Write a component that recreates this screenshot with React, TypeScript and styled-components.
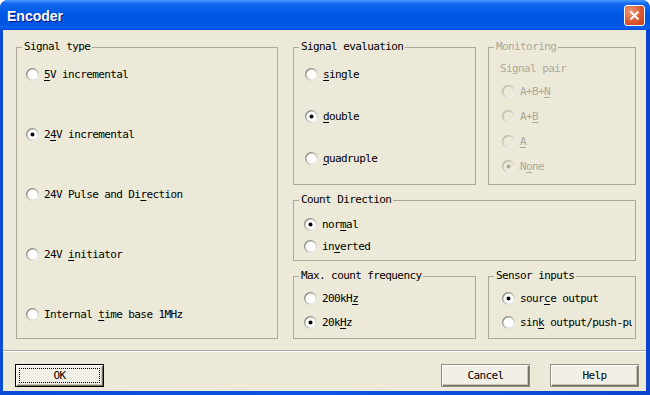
import React from "react";
import styled, { createGlobalStyle } from "styled-components";

const FACE = `"DejaVu Sans Mono", "Liberation Mono", monospace`;

const GlobalStyle = createGlobalStyle`
  html, body {
    margin: 0;
    padding: 0;
    background: #ffffff;
  }
  body {
    font-family: ${FACE};
  }
`;

const Window = styled.div`
  width: 650px;
  height: 395px;
  display: flex;
  flex-direction: column;
  border-radius: 8px 8px 0 0;
  overflow: hidden;
  background: #0b50df;
`;

const TitleBar = styled.div`
  height: 30px;
  flex: none;
  display: flex;
  align-items: center;
  justify-content: space-between;
  padding: 0 5px 0 7px;
  box-sizing: border-box;
  background: linear-gradient(
    to bottom,
    #4a9bff 0%,
    #1268f0 12%,
    #0058e6 45%,
    #0055e3 80%,
    #0a5ff0 92%,
    #0047d4 100%
  );
`;

const Title = styled.div`
  font-family: "Liberation Sans", Arial, sans-serif;
  font-weight: 700;
  font-size: 14px;
  color: #ffffff;
  text-shadow: 1px 1px 0 #0a1883;
  margin-top: 1px;
`;

const CloseButton = styled.div`
  width: 21px;
  height: 21px;
  box-sizing: border-box;
  border: 1px solid #ffffff;
  border-radius: 3px;
  display: flex;
  align-items: center;
  justify-content: center;
  background: radial-gradient(circle at 30% 30%, #ef9c7c 0%, #d9582f 55%, #c2401a 100%);
`;

const Frame = styled.div`
  flex: 1;
  display: flex;
  padding: 0 4px 4px 3px;
  background: linear-gradient(to right, #0a4bd8, #0c55e6 50%, #0a44cf);
`;

const Client = styled.div`
  flex: 1;
  display: flex;
  flex-direction: column;
  background: #ece9d8;
`;

const Main = styled.div`
  display: flex;
  gap: 15px;
  padding: 11px 10px 0 13px;
`;

const Column = styled.div`
  display: flex;
  flex-direction: column;
  gap: 9px;
  width: 343px;
`;

const Row = styled.div`
  display: flex;
  gap: 12px;
`;

const Group = styled.fieldset<{ $w?: number; $h: number }>`
  margin: 0;
  padding: 0;
  min-width: 0;
  box-sizing: border-box;
  border: 1px solid #aca899;
  width: ${(p) => (p.$w ? `${p.$w}px` : "auto")};
  height: ${(p) => p.$h}px;
  flex: ${(p) => (p.$w ? "none" : "1")};
`;

const Legend = styled.legend<{ $disabled?: boolean }>`
  margin-left: 5px;
  padding: 0 2px;
  font-size: 11px;
  line-height: 12px;
  letter-spacing: -0.6px;
  color: ${(p) => (p.$disabled ? "#aca899" : "#000000")};
`;

const Body = styled.div<{ $pt: number; $pl: number; $gap: number }>`
  display: flex;
  flex-direction: column;
  padding: ${(p) => p.$pt}px 3px 0 ${(p) => p.$pl}px;
  gap: ${(p) => p.$gap}px;
  overflow: hidden;
`;

const Caption = styled.div`
  height: 12px;
  line-height: 12px;
  font-size: 11px;
  letter-spacing: -0.6px;
  color: #aca899;
  margin-left: -2px;
  margin-bottom: 1px;
`;

const Option = styled.label<{ $disabled?: boolean }>`
  display: flex;
  align-items: center;
  gap: 5px;
  height: 20px;
  white-space: nowrap;
  overflow: hidden;
  font-size: 11px;
  letter-spacing: -0.6px;
  color: ${(p) => (p.$disabled ? "#aca899" : "#000000")};
`;

const U = styled.span`
  text-decoration: underline;
  text-underline-offset: 2px;
`;

const Separator = styled.div`
  margin-top: 11px;
  height: 1px;
  background: #aca899;
  border-bottom: 1px solid #ffffff;
`;

const Footer = styled.div`
  display: flex;
  align-items: center;
  padding: 12px 7px 0 12px;
  gap: 20px;
`;

const Spacer = styled.div`
  flex: 1;
`;

const Button = styled.div<{ $default?: boolean }>`
  width: 89px;
  height: 23px;
  box-sizing: border-box;
  display: flex;
  align-items: center;
  justify-content: center;
  font-size: 11px;
  letter-spacing: -0.6px;
  color: #000000;
  background: #f2f0e6;
  border: 1px solid ${(p) => (p.$default ? "#000000" : "#8f8d80")};
  box-shadow: inset 1px 1px 0 #ffffff, inset -1px -1px 0 #716f64,
    inset -2px -2px 0 #c9c6b6;
  padding: 3px;
`;

const Focus = styled.div`
  flex: 1;
  align-self: stretch;
  display: flex;
  align-items: center;
  justify-content: center;
  border: 1px dotted #000000;
`;

const Radio = ({ checked, disabled }: { checked?: boolean; disabled?: boolean }) => (
  <svg width="13" height="13" viewBox="0 0 13 13" style={{ flex: "none" }}>
    <defs>
      <linearGradient id={disabled ? "rdg" : "rg"} x1="0" y1="0" x2="1" y2="1">
        <stop offset="0" stopColor={disabled ? "#aca899" : "#6f6f68"} />
        <stop offset="0.5" stopColor={disabled ? "#d6d3c4" : "#c0beb4"} />
        <stop offset="1" stopColor="#ffffff" />
      </linearGradient>
    </defs>
    <circle
      cx="6.5"
      cy="6.5"
      r="5.8"
      fill={disabled ? "#ece9d8" : "#ffffff"}
      stroke={`url(#${disabled ? "rdg" : "rg"})`}
      strokeWidth="1.4"
    />
    {checked && <circle cx="6.5" cy="6.5" r="2" fill={disabled ? "#aca899" : "#000000"} />}
  </svg>
);

const Opt = ({
  checked,
  disabled,
  children,
}: {
  checked?: boolean;
  disabled?: boolean;
  children: React.ReactNode;
}) => (
  <Option $disabled={disabled}>
    <Radio checked={checked} disabled={disabled} />
    <span>{children}</span>
  </Option>
);

const App = () => {
  return (
    <>
      <GlobalStyle />
      <Window>
        <TitleBar>
          <Title>Encoder</Title>
          <CloseButton>
            <svg width="11" height="11" viewBox="0 0 11 11">
              <path d="M1.5 1.5 L9.5 9.5 M9.5 1.5 L1.5 9.5" stroke="#ffffff" strokeWidth="2" />
            </svg>
          </CloseButton>
        </TitleBar>
        <Frame>
          <Client>
            <Main>
              <Group $w={262} $h={298}>
                <Legend>Signal type</Legend>
                <Body $pt={11} $pl={9} $gap={40}>
                  <Opt>
                    <U>5</U>V incremental
                  </Opt>
                  <Opt checked>
                    2<U>4</U>V incremental
                  </Opt>
                  <Opt>
                    24V Pulse and Di<U>r</U>ection
                  </Opt>
                  <Opt>
                    24V <U>i</U>nitiator
                  </Opt>
                  <Opt>
                    Internal <U>t</U>ime base 1MHz
                  </Opt>
                </Body>
              </Group>
              <Column>
                <Row>
                  <Group $w={183} $h={144}>
                    <Legend>Signal evaluation</Legend>
                    <Body $pt={11} $pl={11} $gap={22}>
                      <Opt>
                        <U>s</U>ingle
                      </Opt>
                      <Opt checked>
                        <U>d</U>ouble
                      </Opt>
                      <Opt>
                        <U>q</U>uadruple
                      </Opt>
                    </Body>
                  </Group>
                  <Group $w={148} $h={144}>
                    <Legend $disabled>Monitoring</Legend>
                    <Body $pt={10} $pl={13} $gap={5}>
                      <Caption>Signal pair</Caption>
                      <Opt disabled>
                        A+B+<U>N</U>
                      </Opt>
                      <Opt disabled>
                        A+<U>B</U>
                      </Opt>
                      <Opt disabled>
                        <U>A</U>
                      </Opt>
                      <Opt disabled checked>
                        N<U>o</U>ne
                      </Opt>
                    </Body>
                  </Group>
                </Row>
                <Group $h={67}>
                  <Legend>Count Direction</Legend>
                  <Body $pt={8} $pl={10} $gap={2}>
                    <Opt checked>
                      nor<U>m</U>al
                    </Opt>
                    <Opt>
                      in<U>v</U>erted
                    </Opt>
                  </Body>
                </Group>
                <Row>
                  <Group $w={183} $h={69}>
                    <Legend>Max. count frequency</Legend>
                    <Body $pt={6} $pl={10} $gap={4}>
                      <Opt>
                        200kH<U>z</U>
                      </Opt>
                      <Opt checked>
                        20k<U>H</U>z
                      </Opt>
                    </Body>
                  </Group>
                  <Group $w={148} $h={69}>
                    <Legend>Sensor inputs</Legend>
                    <Body $pt={6} $pl={13} $gap={4}>
                      <Opt checked>
                        sour<U>c</U>e output
                      </Opt>
                      <Opt>
                        sin<U>k</U> output/push-pull
                      </Opt>
                    </Body>
                  </Group>
                </Row>
              </Column>
            </Main>
            <Separator />
            <Footer>
              <Button $default>
                <Focus>OK</Focus>
              </Button>
              <Spacer />
              <Button>Cancel</Button>
              <Button>Help</Button>
            </Footer>
          </Client>
        </Frame>
      </Window>
    </>
  );
};

export default App;
